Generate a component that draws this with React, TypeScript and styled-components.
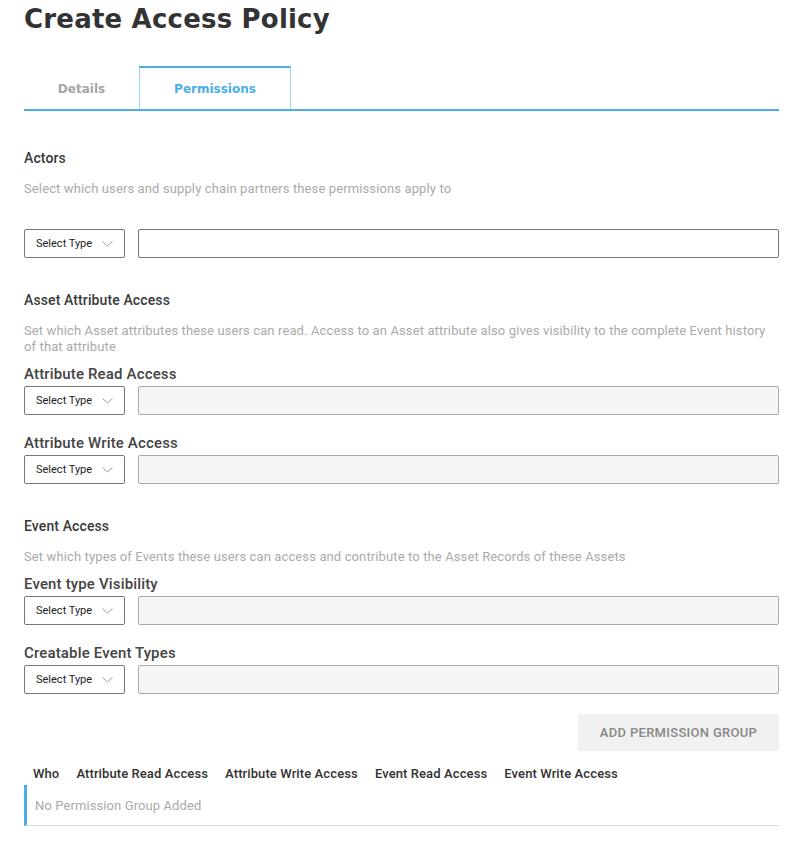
import React from 'react';
import styled, { createGlobalStyle } from 'styled-components';

const GlobalStyle = createGlobalStyle`
  body {
    margin: 0;
    background: #fff;
    font-family: Roboto, 'Liberation Sans', sans-serif;
  }
`;

type FieldRow = { label?: string; disabled?: boolean };

const sections: {
  title: string;
  description: string;
  fields: FieldRow[];
}[] = [
  {
    title: 'Actors',
    description: 'Select which users and supply chain partners these permissions apply to',
    fields: [{}],
  },
  {
    title: 'Asset Attribute Access',
    description:
      'Set which Asset attributes these users can read. Access to an Asset attribute also gives visibility to the complete Event history of that attribute',
    fields: [
      { label: 'Attribute Read Access', disabled: true },
      { label: 'Attribute Write Access', disabled: true },
    ],
  },
  {
    title: 'Event Access',
    description:
      'Set which types of Events these users can access and contribute to the Asset Records of these Assets',
    fields: [
      { label: 'Event type Visibility', disabled: true },
      { label: 'Creatable Event Types', disabled: true },
    ],
  },
];

const columns = [
  'Who',
  'Attribute Read Access',
  'Attribute Write Access',
  'Event Read Access',
  'Event Write Access',
];

const Chevron = () => (
  <svg width="11" height="6" viewBox="0 0 11 6" fill="none">
    <path d="M0.5 0.5L5.5 5L10.5 0.5" stroke="#999" strokeWidth="1" />
  </svg>
);

const App = () => {
  return (
    <>
      <GlobalStyle />
      <Page>
        <Title>Create Access Policy</Title>
        <Tabs>
          <Tab>Details</Tab>
          <Tab active>Permissions</Tab>
        </Tabs>

        {sections.map((section, i) => (
          <Section key={section.title} first={i === 0}>
            <SectionTitle>{section.title}</SectionTitle>
            <Description spaced={!section.fields[0].label}>
              {section.description}
            </Description>
            {section.fields.map((field, j) => (
              <Field key={j} spaced={j > 0}>
                {field.label && <FieldLabel>{field.label}</FieldLabel>}
                <Row>
                  <SelectBox>
                    Select Type
                    <Chevron />
                  </SelectBox>
                  <TextInput disabled={field.disabled} />
                </Row>
              </Field>
            ))}
          </Section>
        ))}

        <ButtonRow>
          <AddButton>ADD PERMISSION GROUP</AddButton>
        </ButtonRow>

        <TableHead>
          {columns.map((c) => (
            <HeadCell key={c}>{c}</HeadCell>
          ))}
        </TableHead>
        <EmptyRow>No Permission Group Added</EmptyRow>
      </Page>
    </>
  );
};

export default App;

const Page = styled.div`
  width: 755px;
  padding: 0 21px 20px 24px;
`;

const Title = styled.h1`
  margin: 0;
  padding-top: 3px;
  font-family: 'DejaVu Sans', sans-serif;
  font-weight: 700;
  font-size: 26px;
  line-height: 32px;
  color: #333;
  letter-spacing: 0.2px;
`;

const Tabs = styled.div`
  display: flex;
  margin-top: 31px;
  border-bottom: 2px solid #4aaee9;
`;

const Tab = styled.div<{ active?: boolean }>`
  width: ${(p) => (p.active ? '152px' : '115px')};
  height: 43px;
  box-sizing: border-box;
  display: flex;
  align-items: center;
  justify-content: center;
  padding-top: ${(p) => (p.active ? '0' : '1px')};
  font-family: 'DejaVu Sans', sans-serif;
  font-weight: 700;
  font-size: 12px;
  color: ${(p) => (p.active ? '#4aaee9' : '#a5a5a5')};
  border-top: 2px solid ${(p) => (p.active ? '#4aaee9' : 'transparent')};
  border-left: 1px solid ${(p) => (p.active ? '#9fd2f3' : 'transparent')};
  border-right: 1px solid ${(p) => (p.active ? '#9fd2f3' : 'transparent')};
`;

const Section = styled.div<{ first?: boolean }>`
  margin-top: ${(p) => (p.first ? '38px' : '33px')};
`;

const SectionTitle = styled.div`
  font-family: 'Roboto Medium', Roboto, sans-serif;
  font-size: 14px;
  font-weight: 500;
  color: #3a3a3a;
  line-height: 18px;
  letter-spacing: 0.1px;
`;

const Description = styled.div<{ spaced?: boolean }>`
  margin-top: 14px;
  margin-bottom: ${(p) => (p.spaced ? '32px' : '10px')};
  font-size: 13px;
  line-height: 16px;
  color: #aaa;
  letter-spacing: 0.12px;
`;

const Field = styled.div<{ spaced?: boolean }>`
  margin-top: ${(p) => (p.spaced ? '19px' : '0')};
`;

const FieldLabel = styled.div`
  font-family: 'Roboto Medium', Roboto, sans-serif;
  font-size: 15px;
  font-weight: 500;
  color: #444;
  line-height: 18px;
  margin-bottom: 3px;
  letter-spacing: 0.15px;
`;

const Row = styled.div`
  display: flex;
  gap: 13px;
`;

const SelectBox = styled.div`
  width: 101px;
  height: 29px;
  box-sizing: border-box;
  border: 1px solid #777;
  border-radius: 2px;
  display: flex;
  align-items: center;
  justify-content: space-between;
  padding: 0 11px;
  font-size: 11px;
  color: #222;
  background: #fff;

  svg {
    margin-left: 8px;
  }
`;

const TextInput = styled.div<{ disabled?: boolean }>`
  flex: 1;
  height: 29px;
  box-sizing: border-box;
  border: 1px solid ${(p) => (p.disabled ? '#aaa' : '#777')};
  border-radius: 2px;
  background: ${(p) => (p.disabled ? '#f5f5f5' : '#fff')};
`;

const ButtonRow = styled.div`
  display: flex;
  justify-content: flex-end;
  margin-top: 20px;
`;

const AddButton = styled.button`
  width: 201px;
  height: 37px;
  border: none;
  border-radius: 2px;
  background: #f1f1f1;
  color: #888;
  font-family: 'Roboto Medium', Roboto, 'Liberation Sans', sans-serif;
  font-size: 13px;
  font-weight: 500;
  letter-spacing: 0.3px;
`;

const TableHead = styled.div`
  display: flex;
  gap: 17px;
  padding: 15px 0 0 9px;
  height: 19px;
`;

const HeadCell = styled.div`
  font-family: 'Roboto Medium', Roboto, sans-serif;
  font-size: 13px;
  font-weight: 500;
  color: #333;
  line-height: 16px;
  letter-spacing: 0.1px;
`;

const EmptyRow = styled.div`
  height: 41px;
  box-sizing: border-box;
  display: flex;
  align-items: center;
  padding-left: 8px;
  border-left: 3px solid #4aaee9;
  border-bottom: 1px solid #ddd;
  font-size: 13px;
  color: #aaa;
  letter-spacing: 0.1px;
`;
